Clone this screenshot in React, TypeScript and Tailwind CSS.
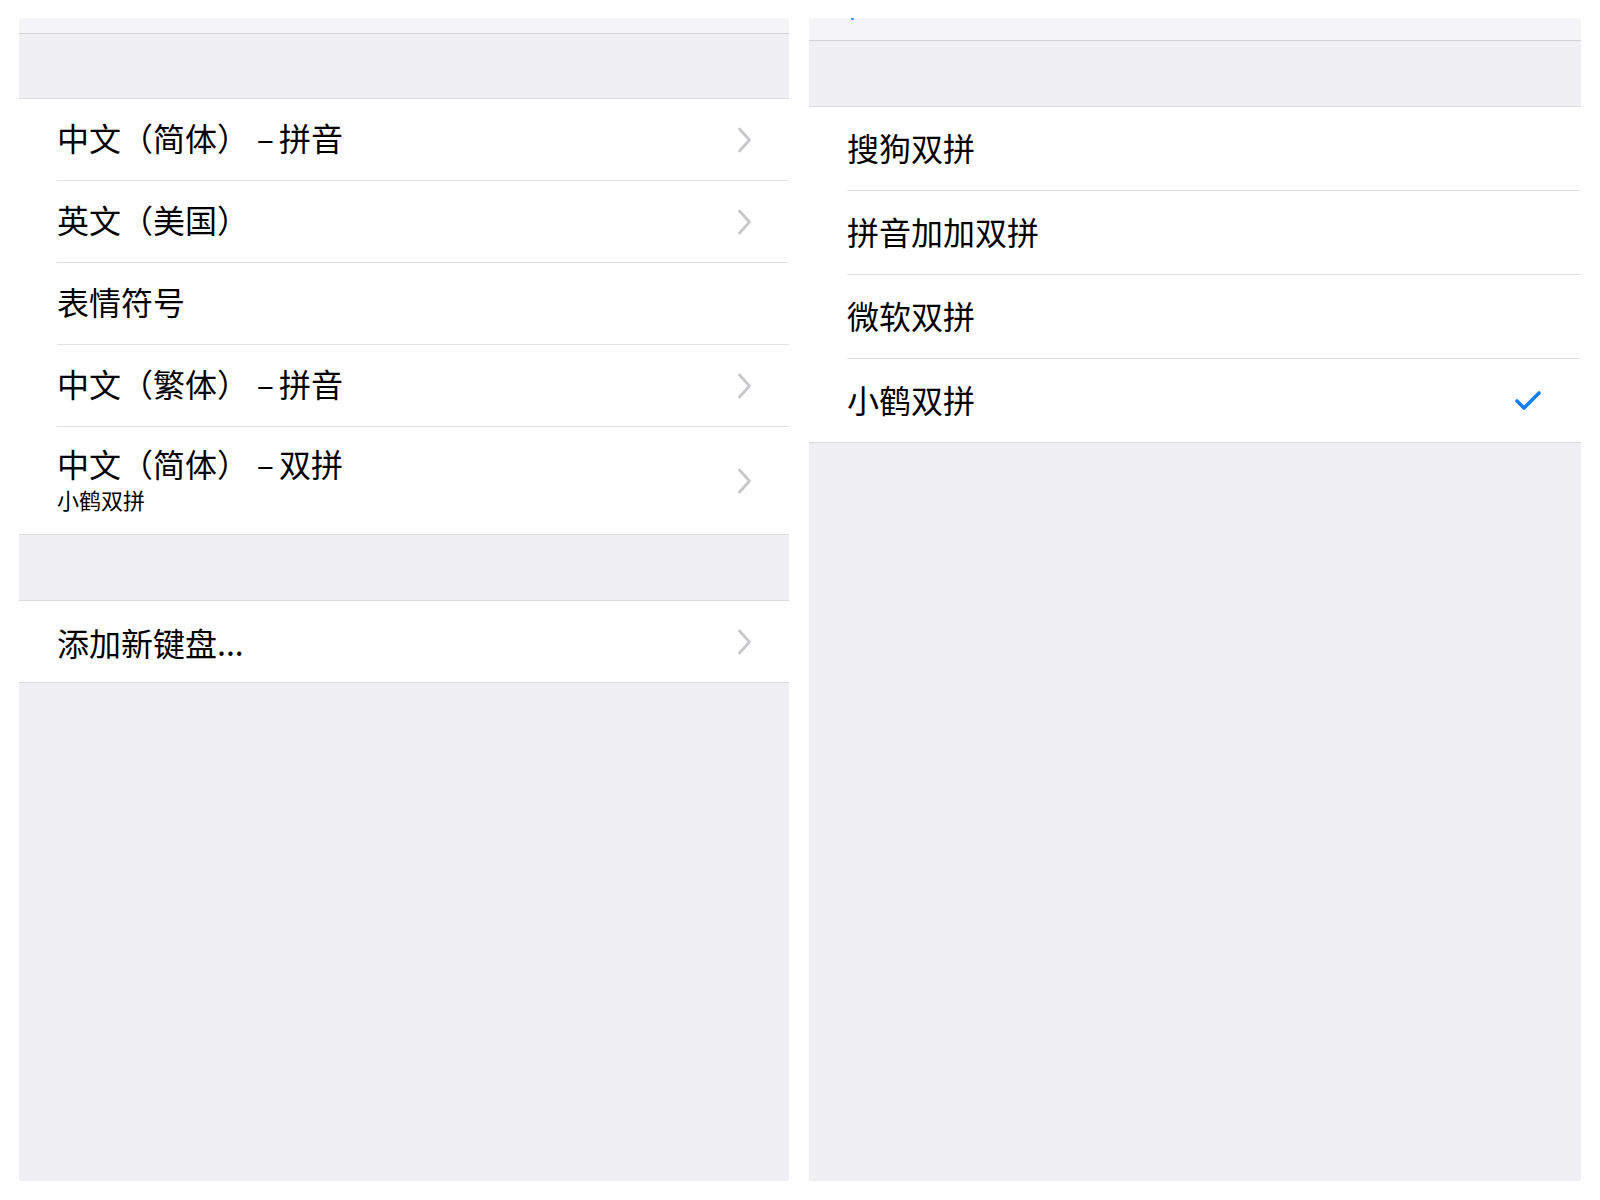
import React from 'react';

const FONT = { fontFamily: '"Noto Sans CJK SC", "Noto Sans", sans-serif' };

const Chevron = () => (
  <svg width="15" height="26" viewBox="0 0 15 26" className="shrink-0">
    <polyline points="2.5,2 12.5,13 2.5,24" fill="none" stroke="#c7c7cc" strokeWidth="2.8" strokeLinecap="round" strokeLinejoin="round" />
  </svg>
);

const Check = () => (
  <svg width="26" height="20" viewBox="0 0 26 20" className="shrink-0">
    <polyline points="2,10 9,17 24,2" fill="none" stroke="#157efb" strokeWidth="3.6" strokeLinecap="round" strokeLinejoin="round" />
  </svg>
);

// the dash sits toward the right of its cell, as in the iOS label
const Title = ({ text }: { text: string }) => {
  const parts = text.split('－');
  if (parts.length < 2) return <>{text}</>;
  return (
    <>
      {parts[0]}
      <span className="inline-block w-[30px] text-right pr-[5px]">–</span>
      {parts[1]}
    </>
  );
};

type Row = { title: string; sub?: string; chevron?: boolean };

const keyboards: Row[] = [
  { title: '中文（简体）－拼音', chevron: true },
  { title: '英文（美国）', chevron: true },
  { title: '表情符号' },
  { title: '中文（繁体）－拼音', chevron: true },
  { title: '中文（简体）－双拼', sub: '小鹤双拼', chevron: true },
];

const schemes = ['搜狗双拼', '拼音加加双拼', '微软双拼', '小鹤双拼'];

export default function App() {
  return (
    <div className="w-[1600px] h-[1200px] bg-white flex gap-[20px] pl-[19px] pt-[18px] text-black" style={FONT}>
      {/* Keyboards list */}
      <div className="w-[770px] h-[1163px] bg-[#efeff4] flex flex-col">
        <div className="h-[16px] bg-[#f5f5f8] border-b border-[#d4d4d8]" />
        <div className="h-[65px] border-b border-[#dcdce0]" />
        <div className="bg-white pl-[38px]">
          {keyboards.map((k, i) => (
            <div
              key={k.title}
              className={
                'flex items-center pr-[37px] ' +
                (i < keyboards.length - 1 ? 'h-[82px] border-b border-[#e3e3e7]' : 'h-[107px]')
              }
            >
              <div className="flex-1 flex flex-col mb-[5px]">
                <span className="text-[32px] leading-[38px]">
                  <Title text={k.title} />
                </span>
                {k.sub && <span className="text-[22px] leading-[26px] mt-[4px]">{k.sub}</span>}
              </div>
              {k.chevron && <Chevron />}
            </div>
          ))}
        </div>
        <div className="h-[67px] border-y border-[#dcdce0]" />
        <div className="bg-white h-[82px] border-b border-[#dcdce0] flex items-center pl-[38px] pr-[37px]">
          <span className="flex-1 text-[32px] leading-[38px]">添加新键盘...</span>
          <Chevron />
        </div>
      </div>

      {/* Shuangpin schemes */}
      <div className="w-[772px] h-[1163px] bg-[#efeff4] flex flex-col relative">
        <div className="absolute left-[42px] top-0 w-[3px] h-[2px] rounded-full bg-[#2f8cff]" />
        <div className="h-[23px] bg-[#f5f5f8] border-b border-[#d4d4d8]" />
        <div className="h-[66px] border-b border-[#dcdce0]" />
        <div className="bg-white pl-[38px] border-b border-[#dcdce0]">
          {schemes.map((s, i) => (
            <div
              key={s}
              className={
                'flex items-center pr-[40px] ' +
                (i < schemes.length - 1 ? 'h-[84px] border-b border-[#e3e3e7]' : 'h-[83px]')
              }
            >
              <span className="flex-1 text-[32px] leading-[38px] mb-[3px]">{s}</span>
              {i === schemes.length - 1 && <Check />}
            </div>
          ))}
        </div>
      </div>
    </div>
  );
}
